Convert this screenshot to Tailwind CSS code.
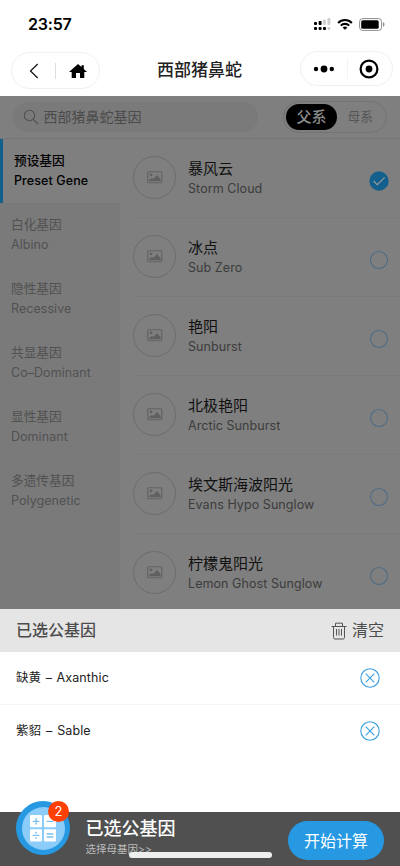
<!DOCTYPE html>
<html lang="zh-CN">
<head>
<meta charset="utf-8">
<meta name="viewport" content="width=device-width, initial-scale=1">
<title>西部猪鼻蛇</title>
<script src="https://cdn.jsdelivr.net/npm/@tailwindcss/browser@4"></script>
</head>
<body class="bg-white">
<svg class="hidden">
  <symbol id="photo" viewBox="0 0 16 13"><rect x=".75" y=".75" width="14" height="11" rx=".8" fill="none" stroke="#646464" stroke-width="1.2"/><circle cx="4" cy="3.8" r="1.4" fill="#606060"/><path d="M2.2 10.2V8.8L5 7l1.6.8L10 4l3.6 4.2v2z" fill="#606060"/></symbol>
  <symbol id="remove" viewBox="0 0 20 20"><circle cx="10" cy="10" r="9.2" fill="none" stroke="#3a9fe0" stroke-width="1.1"/><path d="M5.7 5.7l8.6 8.6M14.3 5.7l-8.6 8.6" stroke="#3a9fe0" stroke-width="1.1"/></symbol>
</svg>
<div class="relative w-[400px] h-[866px] overflow-hidden flex flex-col bg-white font-['Inter','Noto_Sans_CJK_SC',sans-serif]">
  <header class="h-24 shrink-0 flex flex-col">
    <div class="h-12 flex items-center justify-between pl-[28px] pr-[15px]">
      <span class="text-[16px] leading-6 font-semibold text-black tracking-[-0.2px]">23:57</span>
      <div class="flex items-center">
        <svg width="17" height="13" viewBox="0 0 17 13"><g fill="#000"><rect x="0" y="4" width="3" height="3" rx="1"/><rect x="4.6" y="3" width="3" height="4" rx="1"/><rect x="0" y="9" width="3" height="3" rx="1"/><rect x="4.6" y="9" width="3" height="3" rx="1"/><rect x="9" y="9" width="3" height="3" rx="1"/></g><g fill="#cfcfcf"><rect x="13.4" y="9" width="3" height="3" rx="1"/><rect x="9" y="1.5" width="3" height="5.5" rx="1"/><rect x="13.4" y="0" width="3" height="7" rx="1"/></g></svg>
        <svg class="ml-[6px]" width="16" height="13" viewBox="0 0 17 13" fill="none" stroke="#000" stroke-width="2.2"><path d="M1.2 4.8a10.3 10.3 0 0 1 14.6 0M4 7.7a6.4 6.4 0 0 1 9 0"/><path d="M8.5 12.2L6 9.9a3.7 3.7 0 0 1 5 0z" fill="#000" stroke="none"/></svg>
        <svg class="ml-[6px]" width="26" height="13" viewBox="0 0 26 13"><rect x=".6" y=".6" width="22" height="11.8" rx="3" fill="none" stroke="#8c8c8c" stroke-width="1"/><rect x="2.2" y="2.2" width="17.5" height="8.6" rx="1.6"/><path d="M24 4.3c2 .6 2 3.8 0 4.4z" fill="#8c8c8c"/></svg>
      </div>
    </div>
    <div class="h-12 flex items-start">
      <div class="ml-[11px] mt-[4px] w-[89px] h-[37px] rounded-full border border-[#f0f0f0] flex items-center">
        <svg class="ml-[17px]" width="10" height="16" viewBox="0 0 10 16" fill="none" stroke="#111" stroke-width="1.2"><path d="M8.7 1L1.5 8l7.2 7"/></svg>
        <div class="ml-[16px] w-px h-4 bg-[#ddd]"></div>
        <svg class="ml-[13px]" width="18" height="14" viewBox="0 0 18 14"><path d="M9 0l3.5 3V1.3h2.3V5L18 7.9h-2.7V14H11V9H7v5H2.7V7.9H0z"/></svg>
      </div>
      <h1 class="ml-[57px] mt-[10px] w-[88px] text-[17px] leading-6 font-medium text-[#222] whitespace-nowrap">西部猪鼻蛇</h1>
      <div class="ml-[55px] mt-[3px] w-[93px] h-[35px] rounded-full border border-[#f0f0f0] flex items-center">
        <svg class="ml-[12px]" width="22" height="8" viewBox="0 0 22 8"><circle cx="3" cy="4" r="2.2"/><circle cx="11" cy="4" r="3.4"/><circle cx="18.8" cy="4" r="2.2"/></svg>
        <div class="ml-[12px] w-px h-5 bg-[#f3f3f3]"></div>
        <svg class="ml-[11px]" width="20" height="20" viewBox="0 0 20 20"><circle cx="10" cy="10" r="8.4" fill="none" stroke="#000" stroke-width="2.2"/><circle cx="10" cy="10" r="3.4"/></svg>
      </div>
    </div>
  </header>

  <section class="h-[43px] shrink-0 bg-[#7f7f7f] border-b border-[#757575] flex items-start">
    <div class="ml-[13px] mt-[6px] w-[245px] h-[30px] rounded-full bg-[#7a7a7a] flex items-center text-[#4b4b4b]">
      <svg class="ml-[10px]" width="16" height="16" viewBox="0 0 16 16" fill="none" stroke="#515151" stroke-width="1.1"><circle cx="6.5" cy="6.5" r="5.2"/><path d="M10.3 10.3l4.7 4.7"/></svg>
      <span class="ml-[4.5px] text-[14px] leading-5">西部猪鼻蛇基因</span>
    </div>
    <div class="ml-[25px] mt-[5px] w-[104px] h-[32px] rounded-full border border-[#737373] flex items-center pl-[2px]">
      <span class="w-[51px] h-[26px] rounded-full bg-black text-[#8c8c8c] text-[15px] leading-[26px] text-center font-medium">父系</span>
      <span class="ml-[10.5px] text-[12.7px] leading-5 text-[#555]">母系</span>
    </div>
  </section>

  <main class="h-[470px] shrink-0 flex overflow-hidden bg-[#7f7f7f]">
    <nav id="nav" class="w-[120px] shrink-0 bg-[#7a7a7a]"></nav>
    <div id="list" class="flex-1 pl-[13px]"></div>
  </main>

  <section class="h-[203px] shrink-0 bg-white">
    <div class="h-[43px] bg-[#e5e5e5] flex items-center pl-4 pr-4">
      <h2 class="text-[16px] leading-6 font-medium text-[#4c4c4c] -mt-px">已选公基因</h2>
      <svg class="ml-auto mr-[5px]" width="16" height="18" viewBox="0 0 16 18" fill="none" stroke="#555" stroke-width="1"><path d="M.5 4.5h15M4.5 4.2V1.2h7v3M2.5 4.8v10.7q0 1.5 1.5 1.5h8q1.5 0 1.5-1.5V4.8M5.5 7v6.5M8 7v6.5M10.5 7v6.5"/></svg>
      <span class="text-[16px] leading-6 text-[#4c4c4c] -mt-px">清空</span>
    </div>
    <div class="h-[53px] border-b border-[#f5f5f5] flex items-center justify-between pl-4 pr-[20px] text-[12.5px] text-[#222]"><span class="tracking-[0.1px] [word-spacing:0.9px]">缺黄 – Axanthic</span><svg width="20" height="20"><use href="#remove"/></svg></div>
    <div class="h-[52px] flex items-center justify-between pl-4 pr-[20px] text-[12.5px] text-[#222]"><span class="tracking-[0.1px] [word-spacing:1.2px]">紫貂 – Sable</span><svg width="20" height="20"><use href="#remove"/></svg></div>
  </section>

  <footer class="h-[54px] shrink-0 bg-[#505050] flex items-start relative">
    <div class="ml-[16px] -mt-[11px] w-[54px] h-[54px] shrink-0 rounded-full bg-[#2699e2] flex items-center justify-center relative">
      <div class="w-[43px] h-[43px] rounded-full bg-[#8bcdf8] flex items-center justify-center">
        <svg width="26" height="27" viewBox="0 0 26 27"><g fill="#fff"><rect width="12" height="12.3" rx="1"/><rect x="14" width="12" height="12.3" rx="1"/><rect y="14.2" width="12" height="12.3" rx="1"/><rect x="14" y="14.2" width="12" height="12.3" rx="1"/></g><path d="M2.8 6.3h6.6M6.1 3v6.6M16.7 6.3h6.6M2.8 20.4h6.6M16.7 19h6.6M16.7 22h6.6" stroke="#79c0ef" stroke-width="1.3"/><circle cx="6.1" cy="17.7" r=".9" fill="#79c0ef"/><circle cx="6.1" cy="23.1" r=".9" fill="#79c0ef"/></svg>
      </div>
      <span class="absolute left-[32px] top-0 w-[21px] h-[21px] rounded-full bg-[#ff4005] text-white text-[13px] leading-[21px] text-center">2</span>
    </div>
    <div class="ml-[15.5px] pt-[5px] text-white whitespace-nowrap">
      <p class="text-[18px] leading-6 font-medium">已选公基因</p>
      <p class="text-[10.5px] leading-[17px] text-[#bbb]">选择母基因&gt;&gt;</p>
    </div>
    <button class="ml-auto mr-4 mt-[9px] w-[96px] h-[39px] rounded-full bg-[#2699e2] text-white text-[16px] leading-[38px]">开始计算</button>
    <div class="absolute left-[129px] top-[40px] w-[143px] h-[6px] rounded-full bg-[#eee]"></div>
  </footer>
</div>
<script>
const cats = [['预设基因','Preset Gene'],['白化基因','Albino'],['隐性基因','Recessive'],['共显基因','Co–Dominant'],['显性基因','Dominant'],['多遗传基因','Polygenetic']];
document.getElementById('nav').innerHTML = cats.map(([zh, en], i) => `
  <div class="${i ? 'h-16 pl-[11px] pt-[12px] text-[#515151]' : 'h-16 pl-[11px] pt-[12px] bg-[#7f7f7f] border-l-[3px] border-[#125f8c] text-black font-medium'}">
    <p class="text-[12.7px] leading-[20px]">${zh}</p>
    <p class="${i ? 'text-[12.5px] leading-[19px] tracking-[0.05px]' : 'text-[12.5px] leading-[19px] tracking-[0.1px]'}">${en}</p>
  </div>`).join('');
const genes = [['暴风云','Storm Cloud'],['冰点','Sub Zero'],['艳阳','Sunburst'],['北极艳阳','Arctic Sunburst'],['埃文斯海波阳光','Evans Hypo Sunglow'],['柠檬鬼阳光','Lemon Ghost Sunglow']];
document.getElementById('list').innerHTML = genes.map(([zh, en], i) => `
  <div class="h-[79px] border-b border-[#7a7a7a] flex items-center pr-[11px]">
    <div class="-mt-px w-[43px] h-[43px] shrink-0 rounded-full border border-[#6c6c6c] flex items-center justify-center"><svg width="16" height="13"><use href="#photo"/></svg></div>
    <div class="ml-[12px] flex-1 whitespace-nowrap">
      <p class="text-[15px] leading-[21px] text-[#111]">${zh}</p>
      <p class="text-[12.5px] leading-[19px] tracking-[0.07px] text-[#3c3c3c]">${en}</p>
    </div>
    ${i ? '<svg class="mt-[6px]" width="20" height="20" viewBox="0 0 20 20"><circle cx="10" cy="10" r="8.5" fill="none" stroke="#4f6d86" stroke-width="1.1"/></svg>'
        : '<svg class="mt-[6px]" width="20" height="20" viewBox="0 0 20 20"><circle cx="10" cy="10" r="9.7" fill="#135f8d"/><path d="M4.5 10l3.8 3.7 7.4-7.3" fill="none" stroke="#9a9a9a" stroke-width="1.1"/></svg>'}
  </div>`).join('');
</script>
</body>
</html>
